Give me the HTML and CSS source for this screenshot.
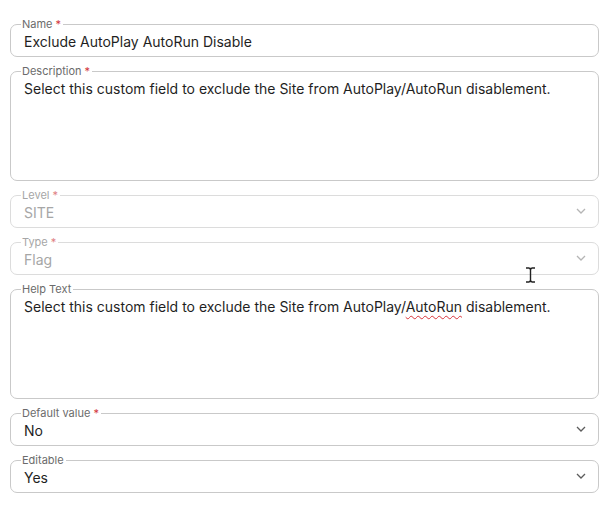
FILE: index.html
```html
<!DOCTYPE html>
<html lang="en">
<head>
    <meta charset="UTF-8">
    <meta name="viewport" content="width=device-width, initial-scale=1.0">
    <title>Custom Field</title>
    <link rel="stylesheet" href="styles.css">
</head>
<body>
    <form class="field-form">
        <fieldset class="field">
            <legend>Name <span class="req">*</span></legend>
            <div class="value">Exclude AutoPlay AutoRun Disable</div>
        </fieldset>

        <fieldset class="field area">
            <legend>Description <span class="req">*</span></legend>
            <div class="value">Select this custom field to exclude the Site from AutoPlay/AutoRun disablement.</div>
        </fieldset>

        <fieldset class="field select disabled">
            <legend>Level <span class="req">*</span></legend>
            <div class="value">SITE</div>
            <svg class="chevron" width="10" height="6" viewBox="0 0 10 6"><path d="M1 1l4 4 4-4" fill="none" stroke="currentColor" stroke-width="1.3"/></svg>
        </fieldset>

        <fieldset class="field select disabled">
            <legend>Type <span class="req">*</span></legend>
            <div class="value">Flag</div>
            <svg class="chevron" width="10" height="6" viewBox="0 0 10 6"><path d="M1 1l4 4 4-4" fill="none" stroke="currentColor" stroke-width="1.3"/></svg>
            <!-- mouse cursor -->
            <svg class="ibeam" width="11" height="16" viewBox="0 0 11 16"><path d="M1 1h3.5M6.5 1H10M5.5 1.5v13M1 15h3.5M6.5 15H10M4 1.5h3M4 14.5h3" fill="none" stroke="#222" stroke-width="1.4"/></svg>
        </fieldset>

        <fieldset class="field area">
            <legend>Help Text</legend>
            <div class="value">Select this custom field to exclude the Site from AutoPlay/<span class="typo">AutoRun</span> disablement.</div>
        </fieldset>

        <fieldset class="field select">
            <legend>Default value <span class="req">*</span></legend>
            <div class="value">No</div>
            <svg class="chevron" width="10" height="6" viewBox="0 0 10 6"><path d="M1 1l4 4 4-4" fill="none" stroke="currentColor" stroke-width="1.3"/></svg>
        </fieldset>

        <fieldset class="field select">
            <legend>Editable</legend>
            <div class="value">Yes</div>
            <svg class="chevron" width="10" height="6" viewBox="0 0 10 6"><path d="M1 1l4 4 4-4" fill="none" stroke="currentColor" stroke-width="1.3"/></svg>
        </fieldset>
    </form>
</body>
</html>
```

FILE: styles.css
```css
body {
    margin: 0;
    background: #ffffff;
    font-family: Inter, "Noto Sans", sans-serif;
    color: #1f1f1f;
}
.field-form {
    padding: 18px 13px 0 10px;
    display: flex;
    flex-direction: column;
    gap: 8px;
}
.field {
    position: relative;
    margin: 0;
    padding: 3px 13px 6px 13px;
    border: 1px solid #c9c9c9;
    border-radius: 7px;
    min-width: 0;
}
.field legend {
    margin-left: -3px;
    padding: 0 2px 0 1px;
    font-size: 11px;
    line-height: 12px;
    color: #6b6b6b;
}
.req {
    color: #d2343a;
}
.value {
    font-size: 14px;
    line-height: 17px;
}
.area {
    box-sizing: border-box;
    height: 116px;
}
.select .value {
    padding-right: 30px;
}
.chevron {
    position: absolute;
    right: 12px;
    top: 7px;
    color: #5c5c5c;
}
.disabled {
    border-color: #dcdcdc;
}
.disabled legend,
.disabled .value {
    color: #a6a6a6;
}
.disabled .req {
    color: #e07f83;
}
.disabled .chevron {
    color: #b5b5b5;
}
.ibeam {
    position: absolute;
    left: 514px;
    top: 19px;
}
.typo {
    text-decoration: underline wavy #d8343a;
    text-decoration-thickness: 1px;
    text-underline-offset: 3px;
}
```
